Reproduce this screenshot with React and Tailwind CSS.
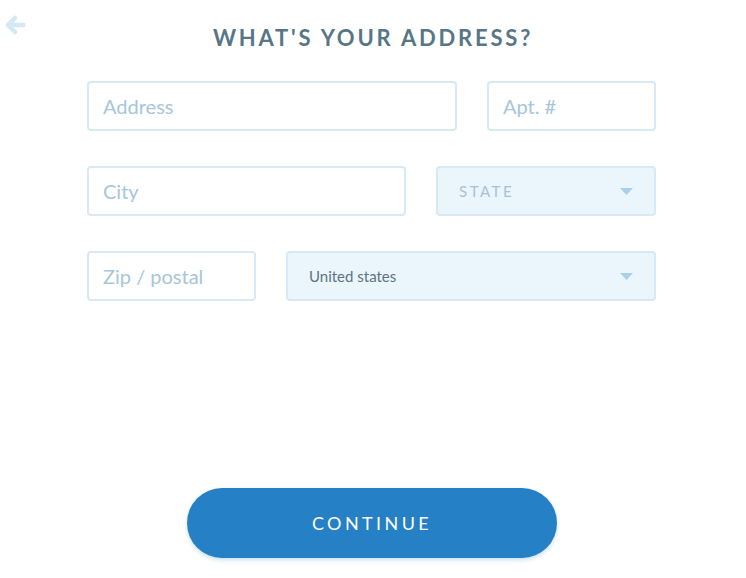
function Field({ placeholder, width }) {
  return (
    <div
      className={`${width} h-[50px] border-2 border-[#d6e9f5] rounded-[4px] bg-white flex items-center px-[14px]`}
    >
      <span className="text-[20px] text-[#a6c6da]">{placeholder}</span>
    </div>
  );
}

function Select({ children, width }) {
  return (
    <div
      className={`${width} h-[50px] border-2 border-[#d6e9f5] rounded-[4px] bg-[#ebf5fc] flex items-center justify-between pl-[21px] pr-[21px]`}
    >
      {children}
      <svg width="13" height="7" viewBox="0 0 13 7">
        <path d="M0 0 L13 0 L6.5 7 Z" fill="#a9d0ea" />
      </svg>
    </div>
  );
}

export default function App() {
  return (
    <div
      className="relative w-[746px] h-[578px] bg-white overflow-hidden"
      style={{ fontFamily: "Lato, 'Open Sans', sans-serif" }}
    >
      <button className="absolute left-[5px] top-[15px]">
        <svg width="21" height="20" viewBox="0 0 21 20" fill="none">
          <path
            d="M18.5 10 H3.5 M10 3 L3 10 L10 17"
            stroke="#d4e8f6"
            strokeWidth="4.5"
            strokeLinecap="round"
            strokeLinejoin="round"
          />
        </svg>
      </button>

      <h1 className="pt-[25px] text-center text-[22px] font-bold tracking-[2.8px] text-[#587685] leading-[26px]">
        WHAT'S YOUR ADDRESS?
      </h1>

      <div className="ml-[87px] w-[569px] mt-[30px] flex flex-col gap-[35px]">
        <div className="flex gap-[30px]">
          <Field placeholder="Address" width="w-[370px]" />
          <Field placeholder="Apt. #" width="w-[169px]" />
        </div>
        <div className="flex gap-[30px]">
          <Field placeholder="City" width="w-[319px]" />
          <Select width="w-[220px]">
            <span className="text-[15px] tracking-[2.5px] text-[#a3c3d7]">STATE</span>
          </Select>
        </div>
        <div className="flex gap-[30px]">
          <Field placeholder="Zip / postal" width="w-[169px]" />
          <Select width="w-[370px]">
            <span className="text-[15px] text-[#5c7482]">United states</span>
          </Select>
        </div>
      </div>

      <div className="mt-[187px] ml-[187px]">
        <button className="w-[370px] h-[70px] rounded-full bg-[#2580c5] text-white text-[18px] tracking-[3.4px] shadow-[0_2px_4px_rgba(37,128,197,0.25)]">
          CONTINUE
        </button>
      </div>
    </div>
  );
}
